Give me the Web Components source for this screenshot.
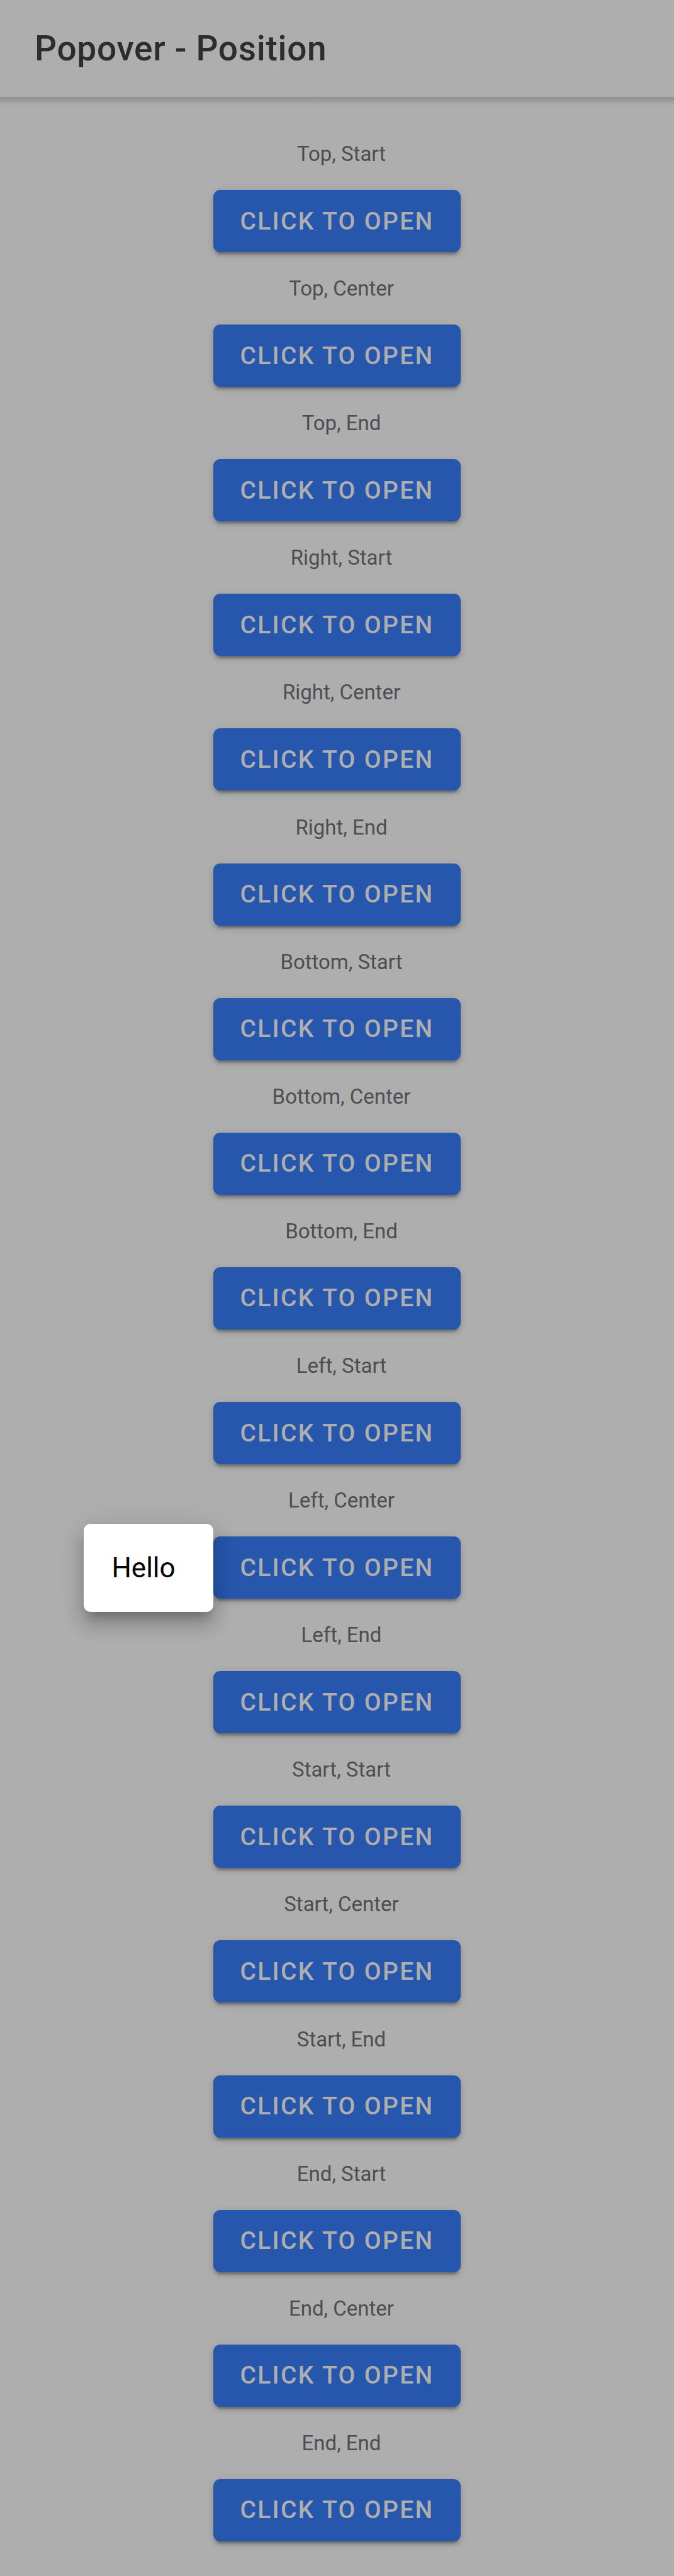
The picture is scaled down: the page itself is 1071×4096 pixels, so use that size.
<!DOCTYPE html>
<html lang="en">
<head>
<meta charset="utf-8">
<meta name="viewport" content="width=device-width, initial-scale=1">
<title>Popover - Position</title>
<style>
  html { background: #aeaeae; }
  body { margin: 0; font-family: Roboto, sans-serif; }
</style>
</head>
<body>
<app-page>
  <app-header slot="header">Popover - Position</app-header>
  <popover-row>Top, Start</popover-row>
  <popover-row>Top, Center</popover-row>
  <popover-row>Top, End</popover-row>
  <popover-row>Right, Start</popover-row>
  <popover-row>Right, Center</popover-row>
  <popover-row>Right, End</popover-row>
  <popover-row>Bottom, Start</popover-row>
  <popover-row>Bottom, Center</popover-row>
  <popover-row>Bottom, End</popover-row>
  <popover-row>Left, Start</popover-row>
  <popover-row>Left, Center<hello-popover slot="popover">Hello</hello-popover></popover-row>
  <popover-row>Left, End</popover-row>
  <popover-row>Start, Start</popover-row>
  <popover-row>Start, Center</popover-row>
  <popover-row>Start, End</popover-row>
  <popover-row>End, Start</popover-row>
  <popover-row>End, Center</popover-row>
  <popover-row>End, End</popover-row>
</app-page>
<script>
  const define = (name, html) => {
    const template = document.createElement('template');
    template.innerHTML = html;
    customElements.define(name, class extends HTMLElement {
      constructor() {
        super();
        this.attachShadow({ mode: 'open' }).append(template.content.cloneNode(true));
      }
    });
  };

  define('app-page', `
    <style>
      :host { display: flex; flex-direction: column; min-height: 100vh; background: #aeaeae; }
      main {
        flex: 1;
        display: grid;
        grid-auto-rows: minmax(min-content, 1fr);
        padding: 71px 0 17px;
      }
    </style>
    <slot name="header"></slot>
    <main><slot></slot></main>`);

  define('app-header', `
    <style>
      :host { display: block; }
      header { display: flex; align-items: center; height: 154px; padding: 0 55px; }
      h1 { margin: 0; font-size: 55px; font-weight: 500; line-height: 64px; letter-spacing: 0.0125em; color: #2d2d2d; }
      .shadow { height: 14px; margin-bottom: -14px; background: linear-gradient(#8e8e8e, #aeaeae); }
    </style>
    <header><h1><slot></slot></h1></header>
    <div class="shadow"></div>`);

  define('popover-row', `
    <style>
      :host { display: flex; flex-direction: column; align-items: center; gap: 38px; }
      h2 { margin: 0 0 0 14px; font-size: 33px; font-weight: 400; line-height: 39px; color: #4c4e52; }
      .anchor { position: relative; }
      button {
        display: block;
        height: 99px;
        padding: 0 42px;
        border: 0;
        border-radius: 11px;
        background: #2657ad;
        color: #aeaeae;
        font: 500 39px/46px Roboto, sans-serif;
        letter-spacing: 0.06em;
        text-transform: uppercase;
        box-shadow: 0 8px 3px -5px rgba(0,0,0,.2), 0 5px 5px rgba(0,0,0,.14), 0 3px 14px rgba(0,0,0,.12);
      }
    </style>
    <h2><slot></slot></h2>
    <div class="anchor">
      <button type="button">Click to open</button>
      <slot name="popover"></slot>
    </div>`);

  define('hello-popover', `
    <style>
      :host {
        position: absolute;
        right: 100%;
        top: 50%;
        transform: translateY(-50%);
        z-index: 1;
        box-sizing: border-box;
        width: 206px;
        padding: 44px;
        border-radius: 11px;
        background: #fff;
        color: #000;
        font-size: 44px;
        line-height: 52px;
        box-shadow: 0 14px 14px -8px rgba(0,0,0,.2), 0 22px 27px 3px rgba(0,0,0,.14), 0 8px 38px 5px rgba(0,0,0,.12);
      }
    </style>
    <slot></slot>`);
</script>
</body>
</html>
